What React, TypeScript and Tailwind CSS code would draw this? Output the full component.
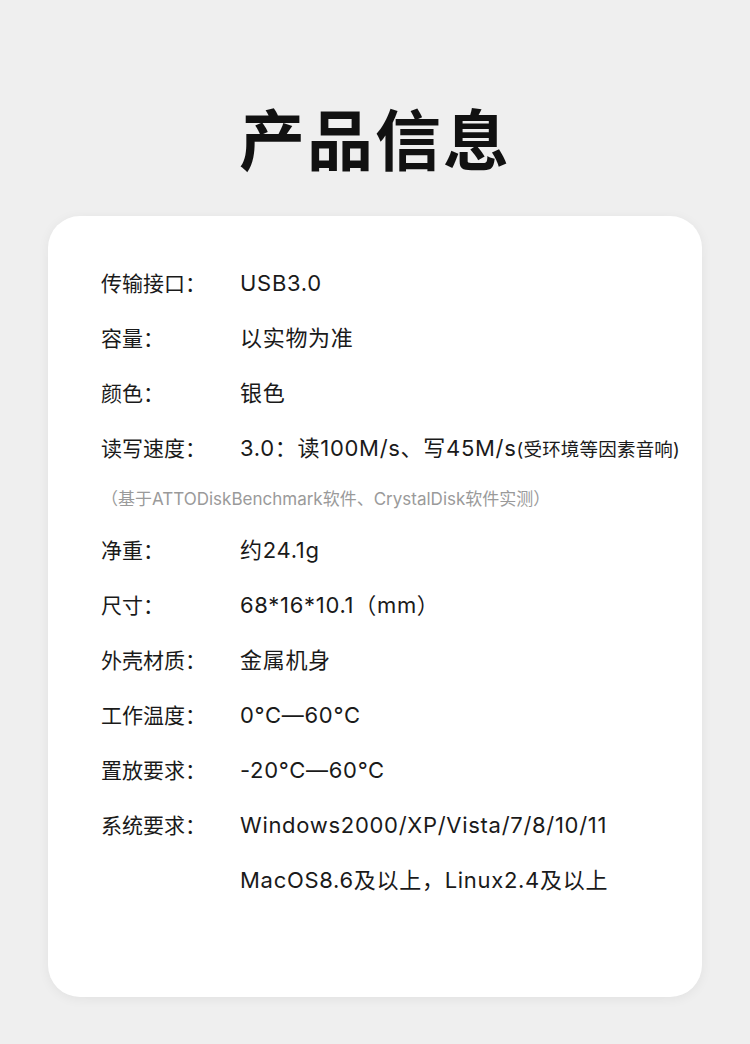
import React from 'react';

type Spec = {
  label?: string;
  value: React.ReactNode;
};

const specsTop: Spec[] = [
  { label: '传输接口：', value: 'USB3.0' },
  { label: '容量：', value: '以实物为准' },
  { label: '颜色：', value: '银色' },
  {
    label: '读写速度：',
    value: (
      <>
        3.0：读100M/s、写45M/s
        <span className="text-[18.5px] tracking-[0.2px]">(受环境等因素音响)</span>
      </>
    ),
  },
];

const specsBottom: Spec[] = [
  { label: '净重：', value: '约24.1g' },
  { label: '尺寸：', value: '68*16*10.1（mm）' },
  { label: '外壳材质：', value: '金属机身' },
  { label: '工作温度：', value: '0°C—60°C' },
  { label: '置放要求：', value: '-20°C—60°C' },
  { label: '系统要求：', value: 'Windows2000/XP/Vista/7/8/10/11' },
  { value: 'MacOS8.6及以上，Linux2.4及以上' },
];

const Row: React.FC<Spec> = ({ label, value }) => (
  <div className="flex h-[55px] items-center text-[#1a1a1a]">
    <div className="w-[139px] shrink-0 text-[21px]">{label}</div>
    <div className="whitespace-nowrap text-[22px] tracking-[0.7px]">{value}</div>
  </div>
);

const App: React.FC = () => {
  return (
    <div
      className="min-h-[1044px] w-[750px] bg-[#efefef] pt-[96px]"
      style={{ fontFamily: 'Inter, "Noto Sans CJK SC", "Noto Sans", sans-serif' }}
    >
      <h1
        className="text-center text-[66px] font-bold leading-[80px] text-[#111] tracking-[2px]"
        style={{ fontFamily: '"Noto Sans CJK SC", sans-serif' }}
      >
        产品信息
      </h1>

      <div className="mx-[48px] mt-[40px] h-[781px] rounded-[32px] bg-white pl-[53px] pt-[40px] shadow-[0_2px_12px_rgba(0,0,0,0.06)]">
        {specsTop.map((s, i) => (
          <Row key={i} {...s} />
        ))}
        <div className="flex h-[47px] items-center text-[17px] text-[#9a9a9a]">
          （基于ATTODiskBenchmark软件、CrystalDisk软件实测）
        </div>
        {specsBottom.map((s, i) => (
          <Row key={i} {...s} />
        ))}
      </div>
    </div>
  );
};

export default App;
